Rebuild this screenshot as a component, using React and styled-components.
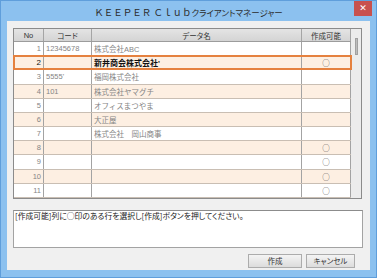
import React from 'react';
import styled, { createGlobalStyle } from 'styled-components';

const Global = createGlobalStyle`
  html, body { margin: 0; padding: 0; }
  body {
    width: 377px; height: 278px; overflow: hidden;
    font-family: "Liberation Sans", "Noto Sans CJK JP", sans-serif;
  }
  * { box-sizing: border-box; }
`;

const Window = styled.div`
  width: 377px;
  height: 278px;
  background: #8cc1ef;
  border: 1px solid #5f9edb;
  display: flex;
  flex-direction: column;
  padding: 0 6px 7px 6px;
`;

const TitleBar = styled.div`
  height: 20px;
  flex: none;
  display: grid;
  grid-template-columns: 1fr auto 1fr;
  align-items: center;
`;

const Title = styled.div`
  grid-column: 2;
  white-space: nowrap;
  color: #2b2b2b;
  font-family: "Noto Sans CJK JP", sans-serif;
  display: flex;
  align-items: baseline;
  padding-top: 1px;
`;

const TitleLatin = styled.span`
  font-size: 9.5px;
`;

const TitleKana = styled.span`
  font-size: 8.5px;
  font-feature-settings: "palt";
`;

const CloseButton = styled.div`
  grid-column: 3;
  justify-self: end;
  align-self: start;
  width: 18px;
  height: 15px;
  margin-right: -2px;
  background: #c8514e;
  color: #fff;
  font-size: 9px;
  line-height: 15px;
  text-align: center;
  font-family: "DejaVu Sans", sans-serif;
`;

const Client = styled.div`
  flex: 1;
  background: #f0f0f0;
  display: flex;
  flex-direction: column;
  padding: 7px 7px 2px 6px;
`;

const GridFrame = styled.div`
  flex: none;
  width: 349px;
  display: flex;
  border: 1px solid #8b8b8b;
  background: #fff;
`;

const Table = styled.div`
  width: 337px;
  flex: none;
  display: flex;
  flex-direction: column;
`;

const cols = '30px 48px 210px 49px';

const HeaderRow = styled.div`
  display: grid;
  grid-template-columns: ${cols};
  height: 13px;
  background: linear-gradient(#e4e4e4, #d4d4d4);
  border-bottom: 1px solid #9c9c9c;
`;

const HeaderCell = styled.div`
  border-right: 1px solid #a5a5a5;
  display: flex;
  align-items: center;
  justify-content: center;
  font-size: 7.5px;
  color: #333;
  font-feature-settings: "palt";
`;

const Row = styled.div`
  display: grid;
  grid-template-columns: ${cols};
  height: 14.18px;
  border-bottom: 1px solid #c9beb3;
  background: ${p => (p.$even ? '#fdefe2' : '#ffffff')};
  position: relative;
  &::after {
    content: '';
    display: ${p => (p.$selected ? 'block' : 'none')};
    position: absolute;
    left: -1px;
    right: -1px;
    top: -1px;
    bottom: -1px;
    border: 2px solid #e5813f;
    pointer-events: none;
  }
`;

const Cell = styled.div`
  border-right: 1px solid #a3a3a3;
  display: flex;
  align-items: center;
  justify-content: ${p => p.$align || 'flex-start'};
  padding: 0 2px;
  font-size: ${p => (p.$selected ? '8px' : '7.5px')};
  font-weight: ${p => (p.$bold ? 700 : 400)};
  color: ${p => (p.$selected ? '#111' : '#858585')};
  white-space: nowrap;
  overflow: hidden;
`;

const Mark = styled.span`
  font-family: "Noto Sans CJK JP", sans-serif;
  font-size: 7.5px;
  color: #444;
`;

const Scrollbar = styled.div`
  flex: 1;
  background: #ececec;
  display: flex;
  flex-direction: column;
  align-items: center;
  padding-top: 9px;
`;

const Thumb = styled.div`
  width: 3px;
  height: 17px;
  background: #bdbdbd;
  border: 1px solid #a0a0a0;
`;

const MessageBox = styled.div`
  margin-top: 11px;
  height: 38px;
  flex: none;
  background: #fff;
  border: 1px solid #a3a3a3;
  border-top-color: #8c8c8c;
  padding: 0 1px;
  font-family: "Noto Sans CJK JP", sans-serif;
  font-size: 7.8px;
  line-height: 9px;
  color: #222;
  font-feature-settings: "palt";
  white-space: nowrap;
`;

const ButtonRow = styled.div`
  margin-top: 6px;
  display: flex;
  justify-content: flex-end;
  gap: 4px;
  padding-right: 8px;
`;

const Button = styled.div`
  width: ${p => p.$w}px;
  height: 14px;
  border: 1px solid #acacac;
  background: linear-gradient(#f4f4f4, #dcdcdc);
  display: flex;
  align-items: center;
  justify-content: center;
  font-size: 7.5px;
  color: #333;
  font-feature-settings: "palt";
`;

const rows = [
  { no: 1, code: '12345678', name: '株式会社ABC' },
  { no: 2, code: '', name: "新井商会株式会社'", ok: true, selected: true },
  { no: 3, code: "5555'", name: '福岡株式会社' },
  { no: 4, code: '101', name: '株式会社ヤマグチ' },
  { no: 5, code: '', name: 'オフィスまつやま' },
  { no: 6, code: '', name: '大正屋' },
  { no: 7, code: '', name: '株式会社　岡山商事' },
  { no: 8, code: '', name: '', ok: true },
  { no: 9, code: '', name: '', ok: true },
  { no: 10, code: '', name: '', ok: true },
  { no: 11, code: '', name: '', ok: true },
];

export default function App() {
  return (
    <>
      <Global />
      <Window>
        <TitleBar>
          <Title>
            <TitleLatin>ＫＥＥＰＥＲ Ｃｌｕｂ</TitleLatin>
            <TitleKana>クライアントマネージャー</TitleKana>
          </Title>
          <CloseButton>✕</CloseButton>
        </TitleBar>
        <Client>
          <GridFrame>
            <Table>
              <HeaderRow>
                <HeaderCell>No</HeaderCell>
                <HeaderCell>コード</HeaderCell>
                <HeaderCell>データ名</HeaderCell>
                <HeaderCell>作成可能</HeaderCell>
              </HeaderRow>
              {rows.map(r => (
                <Row key={r.no} $even={r.no % 2 === 0} $selected={r.selected}>
                  <Cell $align="flex-end" $selected={r.selected}>{r.no}</Cell>
                  <Cell $selected={r.selected}>{r.code}</Cell>
                  <Cell $selected={r.selected} $bold={r.selected}>{r.name}</Cell>
                  <Cell $align="center">{r.ok ? <Mark>○</Mark> : null}</Cell>
                </Row>
              ))}
            </Table>
            <Scrollbar>
              <Thumb />
            </Scrollbar>
          </GridFrame>
          <MessageBox>[作成可能]列に○印のある行を選択し[作成]ボタンを押してください。</MessageBox>
          <ButtonRow>
            <Button $w={54}>作成</Button>
            <Button $w={49}>キャンセル</Button>
          </ButtonRow>
        </Client>
      </Window>
    </>
  );
}
